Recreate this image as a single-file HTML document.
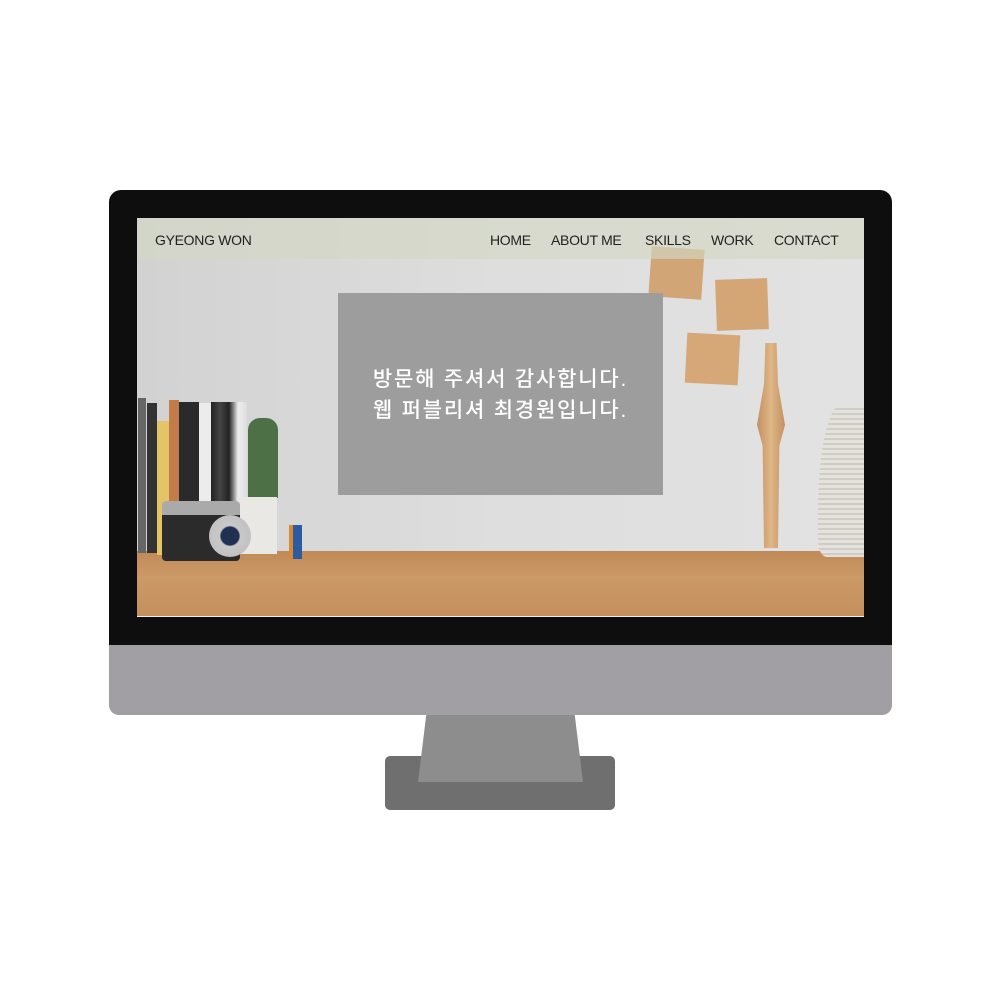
<!DOCTYPE html>
<html><head><meta charset="utf-8"><style>
*{margin:0;padding:0;box-sizing:border-box}
body{width:1000px;height:1000px;background:#fff;position:relative;overflow:hidden;font-family:"Liberation Sans","Noto Sans CJK KR",sans-serif}
.a{position:absolute}
.nav span{position:absolute;top:14px;font-size:14px;color:#222;letter-spacing:-0.3px;white-space:nowrap}
</style></head><body>
<div class="a" style="left:109px;top:190px;width:783px;height:525px;background:#0e0e0e;border-radius:12px"></div>
<div class="a" style="left:109px;top:645px;width:783px;height:70px;background:#a19fa3;border-radius:0 0 10px 10px"></div>
<div class="a" style="left:385px;top:756px;width:230px;height:54px;background:#6f6f6f;border-radius:5px"></div>
<div class="a" style="left:418px;top:715px;width:165px;height:67px;background:#8d8d8d;clip-path:polygon(5% 0,95% 0,100% 100%,0 100%)"></div>
<div class="a" style="left:137px;top:218px;width:727px;height:399px;background:linear-gradient(90deg,#d2d2d2,#dedede 50%,#e2e2e2);overflow:hidden;border-bottom:1px solid #eee">
  <div class="a" style="left:0;top:333px;width:727px;height:66px;background:linear-gradient(180deg,#c08a58,#cc9a66 40%,#c48f5c)"></div>
  <div class="a" style="left:513px;top:30px;width:53px;height:50px;background:#d2a576;transform:rotate(4deg)"></div>
  <div class="a" style="left:579px;top:61px;width:52px;height:51px;background:#d4a676;transform:rotate(-2deg)"></div>
  <div class="a" style="left:549px;top:116px;width:53px;height:50px;background:#d6a878;transform:rotate(3deg)"></div>
  <div class="a" style="left:1px;top:180px;width:8px;height:155px;background:#666"></div>
  <div class="a" style="left:10px;top:185px;width:10px;height:150px;background:#333"></div>
  <div class="a" style="left:20px;top:203px;width:12px;height:134px;background:#e3c567"></div>
  <div class="a" style="left:32px;top:182px;width:10px;height:155px;background:#c17c4a"></div>
  <div class="a" style="left:42px;top:184px;width:20px;height:140px;background:#2a2a2a"></div>
  <div class="a" style="left:62px;top:185px;width:12px;height:140px;background:#ececec"></div>
  <div class="a" style="left:74px;top:184px;width:36px;height:140px;background:linear-gradient(90deg,#222,#444,#222,#eee,#ddd)"></div>
  <div class="a" style="left:111px;top:200px;width:30px;height:80px;background:#4e7046;border-radius:12px 12px 0 0"></div>
  <div class="a" style="left:100px;top:279px;width:40px;height:57px;background:#eae8e4"></div>
  <div class="a" style="left:25px;top:283px;width:78px;height:60px;background:#2b2b2b;border-top:14px solid #aaa;border-radius:4px"></div>
  <div class="a" style="left:72px;top:297px;width:42px;height:42px;border-radius:50%;background:radial-gradient(#1f3050 30%,#c9c9c9 35%,#bbb)"></div>
  <div class="a" style="left:152px;top:307px;width:13px;height:34px;background:#2e5aa0;border-left:4px solid #d58a33"></div>
  <div class="a" style="left:620px;top:125px;width:28px;height:205px;background:linear-gradient(90deg,#c39060,#dfb788,#c39060);clip-path:polygon(30% 0,70% 0,75% 20%,100% 40%,80% 50%,75% 100%,25% 100%,20% 50%,0 40%,25% 20%)"></div>
  <div class="a" style="left:681px;top:187px;width:46px;height:152px;background:repeating-linear-gradient(180deg,#e4e2dc 0 3px,#cfcdc6 3px 5px);border-radius:50% 0 0 20%/70% 0 0 10%"></div>
  <div class="a" style="left:0;top:0;width:727px;height:41px;background:rgba(210,215,195,.65)"></div>
  <div class="nav">
    <span style="left:18px">GYEONG WON</span>
    <span style="left:353px">HOME</span>
    <span style="left:414px">ABOUT ME</span>
    <span style="left:508px">SKILLS</span>
    <span style="left:574px">WORK</span>
    <span style="left:637px">CONTACT</span>
  </div>
  <div class="a" style="left:201px;top:75px;width:325px;height:202px;background:#9d9d9d"></div>
  <div class="a" style="left:201px;top:146px;width:325px;text-align:center;color:#fff;font-size:21px;line-height:31px;letter-spacing:1.8px;font-weight:500">방문해 주셔서 감사합니다.<br>웹 퍼블리셔 최경원입니다.</div>
</div>
</body></html>
